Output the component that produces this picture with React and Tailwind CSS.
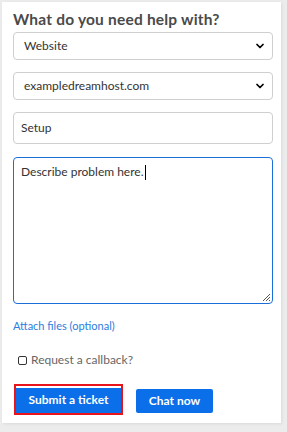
import { ChevronDown } from 'lucide-react';

export default function App() {
  return (
    <div className="w-[287px] h-[432px] bg-[#ececec] pt-[2px] pl-[2px] font-['Lato',sans-serif]">
      <div className="w-[279px] h-[421px] bg-white shadow-[1px_1px_3px_rgba(0,0,0,0.08)] pl-[11px] pr-[8px] pt-[6px]">
        <h2 className="text-[15.5px] leading-[22px] font-bold text-[#4a4a4a] tracking-[0.2px]">
          What do you need help with?
        </h2>

        <div className="mt-[2px] flex flex-col gap-[12px]">
          <SelectBox value="Website" />
          <SelectBox value="exampledreamhost.com" />
          <div className="h-[32px] border border-[#cfcfcf] rounded-[4px] flex items-center px-[7px] text-[12px] text-[#333]">
            Setup
          </div>
          <div className="relative h-[147px] border border-[#1b6fd8] rounded-[4px] px-[7px] pt-[5px] text-[12px] text-[#333] mt-[1px]">
            <span>Describe problem here.</span>
            <span className="inline-block w-px h-[15px] bg-black align-middle ml-[1px]" />
            <svg className="absolute right-[1px] bottom-[1px]" width="9" height="9" viewBox="0 0 9 9">
              <path d="M8 1L1 8M8 4L4 8M8 7L7 8" stroke="#555" strokeWidth="1" />
            </svg>
          </div>
        </div>

        <a className="block mt-[14px] text-[11px] leading-[16px] text-[#2b7de0]">Attach files (optional)</a>

        <label className="mt-[17px] ml-[5px] flex items-center gap-[4px] text-[12px] text-[#666]">
          <span className="w-[9px] h-[9px] border border-[#333] rounded-[2px] bg-white" />
          Request a callback?
        </label>

        <div className="mt-[18px] flex items-center gap-[13px]">
          <div className="border-2 border-[#e8141c] ml-[1px] mt-[-3px]">
            <button className="h-[25px] w-[105px] bg-[#0a6fe8] text-white text-[12px] font-bold">
              Submit a ticket
            </button>
          </div>
          <button className="h-[24px] w-[77px] bg-[#0a6fe8] text-white text-[12px] font-bold rounded-[2px]">
            Chat now
          </button>
        </div>
      </div>
    </div>
  );
}

function SelectBox({ value }) {
  return (
    <div className="h-[28px] border border-[#cfcfcf] rounded-[4px] flex items-center justify-between pl-[10px] pr-[6px] text-[12px] text-[#333]">
      <span>{value}</span>
      <ChevronDown size={12} strokeWidth={3.5} className="text-black" />
    </div>
  );
}
